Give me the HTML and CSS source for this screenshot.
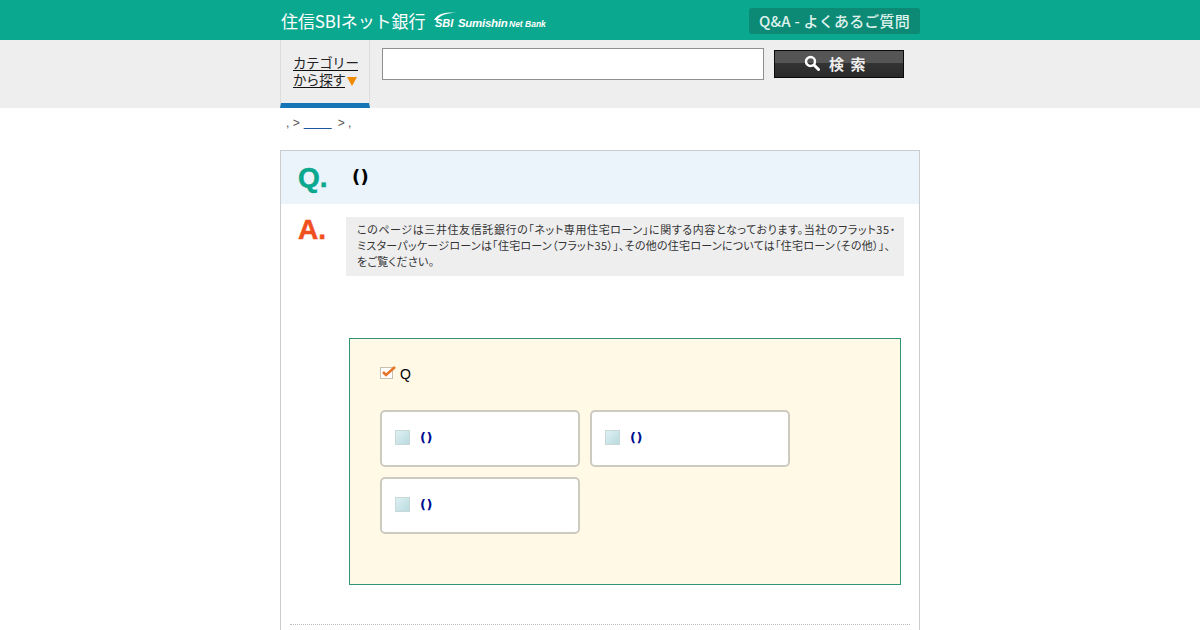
FILE: index.html
```html
<!DOCTYPE html>
<html lang="ja">
<head>
<meta charset="utf-8">
<title>Q&amp;A - よくあるご質問</title>
<link rel="stylesheet" href="styles.css">
</head>
<body>
<header class="top">
  <div class="wrap top-in">
    <div class="logo">
      <span class="logo-jp">住信SBIネット銀行</span>
      <span class="logo-en">
        <svg class="swoosh" width="26" height="16" viewBox="0 0 26 16"><path d="M1 9C4 3 13 0 24 2C15 1.500 7 4 4 9Z" fill="#fff"/></svg>
        <span class="logo-sbi">SBI</span><span class="logo-sumi">Sumishin</span><span class="logo-net">Net Bank</span>
      </span>
    </div>
    <div class="qa-badge">Q&amp;A - よくあるご質問</div>
  </div>
</header>
<div class="search-band">
  <div class="wrap search-in">
    <div class="cat-tab">
      <span class="cat-line">カテゴリー</span>
      <span class="cat-line">から探す<i class="cat-arrow"></i></span>
    </div>
    <input class="search-input" type="text" aria-label="検索">
    <button class="search-btn" type="button">
      <svg width="16" height="16" viewBox="0 0 16 16"><circle cx="6.500" cy="6.500" r="4.500" fill="none" stroke="#fff" stroke-width="2.400"/><path d="M10 10l4.500 4.500" stroke="#fff" stroke-width="3" stroke-linecap="round"/></svg>
      <span>検 索</span>
    </button>
  </div>
</div>
<div class="wrap">
  <nav class="crumbs"><span>, &gt;</span><a href="#">&nbsp;&nbsp;&nbsp;&nbsp;&nbsp;&nbsp;&nbsp;&nbsp;</a><span>&gt; ,</span></nav>
  <main class="card">
    <div class="q-row">
      <span class="q-mark">Q.</span>
      <h1 class="q-title">( )</h1>
    </div>
    <div class="a-row">
      <span class="a-mark">A.</span>
      <p class="notice"><span class="notice-long">このページは三井住友信託銀行の「ネット専用住宅ローン」に関する内容となっております。当社のフラット35・</span><br>ミスターパッケージローンは「住宅ローン（フラット35）」、その他の住宅ローンについては「住宅ローン（その他）」、<br>をご覧ください。</p>
    </div>
    <section class="survey">
      <div class="survey-q">
        <svg class="tick" width="17" height="15" viewBox="0 0 17 15"><rect x="0.500" y="2.500" width="12" height="11" fill="#fff" stroke="#c9bfb0"/><path d="M3 7l3 3l9-8" fill="none" stroke="#e8742a" stroke-width="2.600"/></svg>
        <span>Q</span>
      </div>
      <div class="choices">
        <label class="choice"><i class="box"></i><b>( )</b></label>
        <label class="choice"><i class="box"></i><b>( )</b></label>
        <label class="choice"><i class="box"></i><b>( )</b></label>
      </div>
    </section>
    <div class="dots"></div>
  </main>
</div>
</body>
</html>
```

FILE: styles.css
```css
* { box-sizing: border-box; }
html, body { margin: 0; padding: 0; height: 630px; overflow: hidden; }
body { background: #fff; font-family: "Liberation Sans", "Noto Sans CJK JP", sans-serif; color: #000; }
.wrap { width: 640px; margin: 0 auto; }

.top { height: 40px; background: #0aa88f; }
.top-in { display: flex; justify-content: space-between; align-items: flex-start; height: 40px; }
.logo { display: flex; align-items: center; height: 40px; padding: 1px 0 0 1px; color: #fff; white-space: nowrap; }
.logo-jp { font-family: "Noto Sans CJK JP", sans-serif; font-size: 17px; letter-spacing: -0.100px; line-height: 20px; width: 152px; }
.logo-en { display: flex; align-items: baseline; position: relative; font-family: "Liberation Sans", sans-serif; font-style: italic; font-weight: bold; padding-left: 2px; padding-top: 5px; }
.swoosh { position: absolute; left: 0; top: -1px; }
.logo-sbi { font-size: 11px; width: 23px; }
.logo-sumi { font-size: 11.500px; letter-spacing: -0.300px; width: 51px; }
.logo-net { font-size: 8.500px; width: 40px; }
.qa-badge { margin-top: 8px; width: 171px; height: 26px; background: #0d8a75; border-radius: 3px; color: #dff2ed; font-family: "Noto Sans CJK JP", sans-serif; font-size: 15px; font-weight: 500; line-height: 26px; letter-spacing: 0.200px; text-align: center; white-space: nowrap; }

.search-band { height: 68px; background: #eeeeee; }
.search-in { display: flex; align-items: flex-start; height: 68px; }
.cat-tab { width: 90px; height: 68px; background: #eeeeee; border-left: 1px solid #dddddd; border-right: 1px solid #dddddd; border-bottom: 5px solid #1476b6; padding: 14px 0 0 12px; display: flex; flex-direction: column; font-family: "Noto Sans CJK JP", sans-serif; font-size: 13.500px; line-height: 16px; color: #222; }
.cat-line { display: block; width: 65px; height: 17px; border-bottom: 1px solid #111; letter-spacing: -0.400px; white-space: nowrap; }
.cat-line:last-child { width: 52px; }
.cat-arrow { position: absolute; width: 0; height: 0; margin: 6px 0 0 2px; border-left: 5px solid transparent; border-right: 5px solid transparent; border-top: 9px solid #f08a00; }
.search-input { margin: 8px 0 0 12px; width: 382px; height: 32px; background: #fff; border: 1px solid #8f8f8f; padding: 0 4px; }
.search-btn { margin: 10px 0 0 10px; width: 130px; height: 28px; border: 1px solid #0a0a0a; padding: 0 7px 2px 0; background: linear-gradient(#555 0, #555 48%, #333 48%, #2a2a2a 100%); color: #eee; font-family: "Noto Sans CJK JP", sans-serif; font-size: 15px; font-weight: 700; display: flex; align-items: center; justify-content: center; gap: 9px; letter-spacing: 1.500px; white-space: pre; }

.crumbs { height: 42px; padding: 7px 0 0 6px; display: flex; gap: 4px; font-size: 12px; line-height: 16px; color: #555; white-space: pre; }
.crumbs a { color: #1a5a9c; text-decoration: underline; width: 28px; margin-right: 2px; letter-spacing: 0.170px; }

.card { border: 1px solid #cccccc; border-bottom: 0; height: 480px; }
.q-row { height: 53px; background: #ebf3fb; display: flex; align-items: center; }
.q-mark { width: 71px; padding-left: 17px; font-family: "Liberation Sans", sans-serif; font-size: 28px; line-height: 30px; font-weight: bold; color: #0aa88f; -webkit-text-stroke: 0.500px #0aa88f; }
.q-title { margin: 0 0 2px; font-size: 18px; font-weight: bold; letter-spacing: -3px; white-space: pre; font-family: "DejaVu Sans", sans-serif; }
.a-row { display: flex; align-items: flex-start; padding-top: 13px; }
.a-mark { width: 65px; padding-left: 17px; font-size: 28px; line-height: 26px; font-weight: bold; color: #f0501e; -webkit-text-stroke: 0.500px #f0501e; }
.notice { margin: 0; width: 558px; height: 59px; background: #eeeeef; padding: 4px 0 0 11px; font-family: "Noto Sans CJK JP", sans-serif; font-size: 11px; line-height: 16px; font-feature-settings: "palt"; letter-spacing: 0.260px; color: #333; white-space: nowrap; }
.notice-long { letter-spacing: 0.600px; }

.survey { margin: 62px 0 0 68px; width: 552px; height: 247px; background: #fff9e6; border: 1px solid #2f9478; padding: 26px 0 0 30px; }
.survey-q { display: flex; align-items: flex-start; gap: 3px; height: 45px; font-size: 14px; line-height: 18px; }
.tick { display: block; }
.choices { display: grid; grid-template-columns: 200px 200px; gap: 10px; }
.choice { display: flex; align-items: flex-start; height: 57px; background: #fff; border: 2px solid #cdcbc1; border-radius: 5px; padding: 18px 0 0 13px; }
.box { width: 15px; height: 15px; background: linear-gradient(135deg, #dff0f2, #b9dbe0); border: 1px solid #c8d8d8; margin-right: 10px; }
.choice b { font-family: "DejaVu Sans", sans-serif; font-size: 13px; line-height: 16px; letter-spacing: -2px; color: #000c8f; white-space: pre; }

.dots { margin: 39px 9px 0; border-top: 1px dotted #bbbbbb; }
```
